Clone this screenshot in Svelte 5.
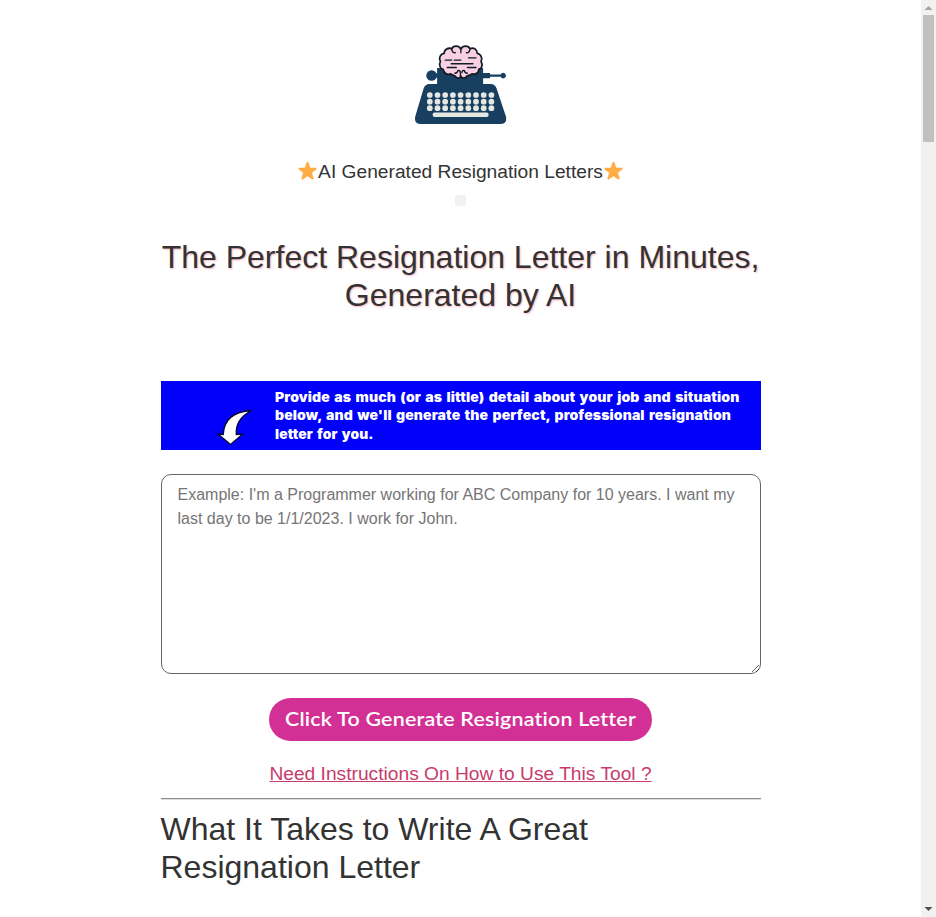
<script>
  const keyRows = [60, 66.7, 73.2];
  const keyCols = [0, 1, 2, 3, 4, 5, 6, 7, 8];
  let details = $state('');
</script>

{#snippet star()}
  <svg class="star" width="19" height="19" viewBox="0 0 36 36" aria-hidden="true">
    <path fill="#ffac45" stroke="#ffac45" stroke-width="1" stroke-linejoin="round" d="M27.3 34.5a1.6 1.6 0 0 1-1-.3L18 28.200l-8.300 6a1.600 1.600 0 0 1-2.500-1.900l3.100-10-8.400-6a1.700 1.700 0 0 1 1-3.100l10.300 0 3.200-10c.5-1.500 2.700-1.500 3.200 0l3.300 10 10.200 0a1.700 1.700 0 0 1 1 3.100l-8.400 6 3.200 10a1.600 1.600 0 0 1-1.600 2.200z"/>
  </svg>
{/snippet}

<div class="window">
  <main>
    <svg class="logo" width="110" height="100" viewBox="0.9 0 110 100" role="img" aria-label="Typewriter with a brain">
      <g fill="#193f60">
        <circle cx="26.500" cy="40.500" r="5.300"/>
        <path d="M26 38.500h6v-5.500h46v5h7v1.500h10.500a2.800 2.800 0 1 1 0 2.200H85v1.600h-7V49h7.500q4.500 0 6 4.500L101 82q1 7-5 7H15q-6 0-5-7l8.500-28.500Q20 49 24.500 49H32v-6.500h-6z"/>
      </g>
      <g fill="#e5e8e2">
        {#each keyRows as y}
          {#each keyCols as c}
            <circle cx={24.700 + c * 7.700} cy={y} r="2.850"/>
          {/each}
        {/each}
        <rect x="27.500" y="77.500" width="56" height="4.500" rx="2"/>
      </g>
      <g transform="translate(-0.300 -0.600) scale(1.010 1.080)">
        <path fill="#f9cfe3" stroke="#101b26" stroke-width="1.700" stroke-linejoin="round" d="M55.500 13.500C53.500 10 48 10 46.500 13.300C42.500 11.700 38.700 14.500 39 17.500C35 18 33.300 22 35.300 25C33.500 28 35 32 38 32.500C38.500 36 42 37.800 45.500 36.500C47.500 38.500 49.200 37.500 50.500 39.300C52.500 41.300 55 40.500 55.500 38.500C56 40.500 59 41.300 60.800 39.300C62 37.500 64.500 38.500 66.500 36.500C70 37.800 73.500 35.500 73.200 32.500C76.500 31.500 77.500 28 75.500 25C77.300 21.500 75 18 71.700 17.500C71.500 13.500 68 11.700 64.500 13.300C63 10 57.500 10 55.500 13.500Z"/>
        <path fill="none" stroke="#101b26" stroke-width="1.300" stroke-linecap="round" d="M46.500 13.500q0 3.500 3.500 3.500M64.500 13.500q0 3.500-3.500 3.500M55.500 13.500v3.500M40 23.800h6.500M49 23.800h6.500M63 21.700h7.500M46 27.200h21.500M42 30.700h9M62 30.700h8.500M52.500 33.500q2.500-.5 2.500 2v3M59 33.500q-2.500-.5-2.500 2M52.500 33.500q-.5 2.500-3 2.500M59 33.500q.5 2.500 3 2.500"/>
      </g>
    </svg>

    <p class="brand">{@render star()}<span>AI Generated Resignation Letters</span>{@render star()}</p>
    <span class="chip"></span>

    <h1>The Perfect Resignation Letter in Minutes, Generated by AI</h1>

    <svg class="banner" width="600" height="69" viewBox="0 0 600 69">
      <rect width="600" height="69" fill="#0000fb"/>
      <path d="M90.500 29.500C73 30.500 63 38 62.200 53.500L57 53L69.500 63.500L81.500 53.200L75.300 53.500C74.500 43 79 35.500 90.500 29.500Z" fill="#fff" stroke="#06062b" stroke-width="1.300"/>
      <g fill="#fff">
        <text x="114" y="21" textLength="464.500" lengthAdjust="spacingAndGlyphs">Provide as much (or as little) detail about your job and situation</text>
        <text x="114" y="39.300" textLength="456" lengthAdjust="spacingAndGlyphs">below, and we'll generate the perfect, professional resignation</text>
        <text x="114" y="58.300" textLength="98.500" lengthAdjust="spacingAndGlyphs">letter for you.</text>
      </g>
    </svg>

    <textarea bind:value={details} placeholder="Example: I'm a Programmer working for ABC Company for 10 years. I want my last day to be 1/1/2023. I work for John."></textarea>

    <button type="button">
      <svg width="352" height="27" viewBox="0 0 352 27">
        <text x="0" y="20" textLength="351" lengthAdjust="spacingAndGlyphs" fill="#fff">Click To Generate Resignation Letter</text>
      </svg>
    </button>

    <a href="#instructions">Need Instructions On How to Use This Tool ?</a>
    <hr />
    <h2>What It Takes to Write A Great Resignation Letter</h2>
  </main>

  <div class="scrollbar" aria-hidden="true">
    <svg width="15" height="15" viewBox="0 0 15 15"><path d="M3.500 10h8L7.500 6z" fill="#a3a3a3"/></svg>
    <div class="thumb"></div>
    <svg class="down" width="15" height="15" viewBox="0 0 15 15"><path d="M3.500 5h8L7.500 9z" fill="#505050"/></svg>
  </div>
</div>

<style>
  :global(body) {
    margin: 0;
    background: #fff;
    overflow: hidden;
  }
  .window {
    display: flex;
    height: 917px;
    overflow: hidden;
    font-family: "Liberation Sans", Arial, sans-serif;
    color: #333;
  }
  main {
    flex: 1;
    display: flex;
    flex-direction: column;
    align-items: center;
    padding-top: 35px;
  }
  main > * {
    flex-shrink: 0;
  }
  .logo,
  .banner {
    display: block;
  }
  .brand {
    display: flex;
    align-items: center;
    height: 29px;
    margin: 22px 0 0;
    font-size: 19.200px;
    line-height: 29px;
    gap: 1px;
  }
  .star {
    position: relative;
    top: -1px;
  }
  .chip {
    width: 11px;
    height: 11px;
    margin-top: 9px;
    border-radius: 2px;
    background: #f1f1f1;
  }
  h1,
  h2 {
    width: 600px;
    margin: 0;
    font-size: 32px;
    font-weight: 400;
    line-height: 38.400px;
  }
  h1 {
    margin-top: 32px;
    text-align: center;
    text-shadow: 1px 1px 2px #f5b5bf;
  }
  .banner {
    margin-top: 66px;
    font: 900 13px Inter, "Liberation Sans", sans-serif;
    letter-spacing: 0.100px;
    word-spacing: 1.300px;
  }
  textarea {
    box-sizing: border-box;
    width: 600px;
    height: 200px;
    margin: 24px 0 0;
    padding: 8px 16px;
    border: 1px solid #666;
    border-radius: 10px;
    font: 16px/24px "Liberation Sans", Arial, sans-serif;
    resize: vertical;
  }
  textarea::placeholder {
    color: #757575;
  }
  button {
    display: flex;
    align-items: center;
    justify-content: center;
    width: 383px;
    height: 43px;
    margin-top: 24px;
    padding: 0;
    border: 0;
    border-radius: 22px;
    background: #d33095;
    font: 600 19.500px Lato, sans-serif;
    letter-spacing: 0.200px;
  }
  a {
    margin-top: 18px;
    color: #c73c6c;
    font-size: 19.200px;
    line-height: 29px;
    text-decoration: underline;
  }
  hr {
    box-sizing: border-box;
    width: 600px;
    height: 2px;
    margin: 10px 0;
    border: 0;
    border-top: 1px solid #8c8c8c;
    border-bottom: 1px solid #dedede;
  }
  .scrollbar {
    display: flex;
    flex-direction: column;
    align-items: center;
    width: 15px;
    background: #f1f1f1;
  }
  .thumb {
    width: 11px;
    height: 127px;
    background: #c1c1c1;
  }
  .down {
    margin-top: auto;
  }
</style>
